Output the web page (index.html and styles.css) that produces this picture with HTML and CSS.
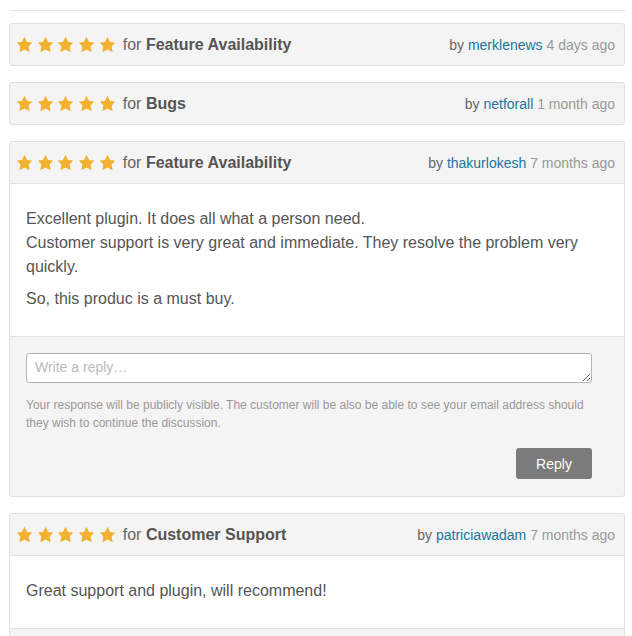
FILE: index.html
```html
<!DOCTYPE html>
<html>
<head>
<meta charset="utf-8">
<link rel="stylesheet" href="styles.css">
</head>
<body>
<div class="reviews">
  <div class="card">
    <div class="head">
      <div class="title">
        <span class="stars">
          <svg viewBox="0 0 20 20"><path d="M10 1l3 6 6 .75-4.12 4.62L16 19l-6-3-6 3 1.13-6.63L1 7.75 7 7z"/></svg>
          <svg viewBox="0 0 20 20"><path d="M10 1l3 6 6 .75-4.12 4.62L16 19l-6-3-6 3 1.13-6.63L1 7.75 7 7z"/></svg>
          <svg viewBox="0 0 20 20"><path d="M10 1l3 6 6 .75-4.12 4.62L16 19l-6-3-6 3 1.13-6.63L1 7.75 7 7z"/></svg>
          <svg viewBox="0 0 20 20"><path d="M10 1l3 6 6 .75-4.12 4.62L16 19l-6-3-6 3 1.13-6.63L1 7.75 7 7z"/></svg>
          <svg viewBox="0 0 20 20"><path d="M10 1l3 6 6 .75-4.12 4.62L16 19l-6-3-6 3 1.13-6.63L1 7.75 7 7z"/></svg>
        </span>
        <span class="for">for <strong>Feature Availability</strong></span>
      </div>
      <div class="meta">by <a href="#">merklenews</a> <span class="time">4 days ago</span></div>
    </div>
  </div>

  <div class="card">
    <div class="head">
      <div class="title">
        <span class="stars">
          <svg viewBox="0 0 20 20"><path d="M10 1l3 6 6 .75-4.12 4.62L16 19l-6-3-6 3 1.13-6.63L1 7.75 7 7z"/></svg>
          <svg viewBox="0 0 20 20"><path d="M10 1l3 6 6 .75-4.12 4.62L16 19l-6-3-6 3 1.13-6.63L1 7.75 7 7z"/></svg>
          <svg viewBox="0 0 20 20"><path d="M10 1l3 6 6 .75-4.12 4.62L16 19l-6-3-6 3 1.13-6.63L1 7.75 7 7z"/></svg>
          <svg viewBox="0 0 20 20"><path d="M10 1l3 6 6 .75-4.12 4.62L16 19l-6-3-6 3 1.13-6.63L1 7.75 7 7z"/></svg>
          <svg viewBox="0 0 20 20"><path d="M10 1l3 6 6 .75-4.12 4.62L16 19l-6-3-6 3 1.13-6.63L1 7.75 7 7z"/></svg>
        </span>
        <span class="for">for <strong>Bugs</strong></span>
      </div>
      <div class="meta">by <a href="#">netforall</a> <span class="time">1 month ago</span></div>
    </div>
  </div>

  <div class="card">
    <div class="head bordered">
      <div class="title">
        <span class="stars">
          <svg viewBox="0 0 20 20"><path d="M10 1l3 6 6 .75-4.12 4.62L16 19l-6-3-6 3 1.13-6.63L1 7.75 7 7z"/></svg>
          <svg viewBox="0 0 20 20"><path d="M10 1l3 6 6 .75-4.12 4.62L16 19l-6-3-6 3 1.13-6.63L1 7.75 7 7z"/></svg>
          <svg viewBox="0 0 20 20"><path d="M10 1l3 6 6 .75-4.12 4.62L16 19l-6-3-6 3 1.13-6.63L1 7.75 7 7z"/></svg>
          <svg viewBox="0 0 20 20"><path d="M10 1l3 6 6 .75-4.12 4.62L16 19l-6-3-6 3 1.13-6.63L1 7.75 7 7z"/></svg>
          <svg viewBox="0 0 20 20"><path d="M10 1l3 6 6 .75-4.12 4.62L16 19l-6-3-6 3 1.13-6.63L1 7.75 7 7z"/></svg>
        </span>
        <span class="for">for <strong>Feature Availability</strong></span>
      </div>
      <div class="meta">by <a href="#">thakurlokesh</a> <span class="time">7 months ago</span></div>
    </div>
    <div class="body">
      <p>Excellent plugin. It does all what a person need.<br>Customer support is very great and immediate. They resolve the problem very quickly.</p>
      <p>So, this produc is a must buy.</p>
    </div>
    <div class="foot">
      <textarea class="reply-box" placeholder="Write a reply…"></textarea>
      <p class="notice">Your response will be publicly visible. The customer will be also be able to see your email address should they wish to continue the discussion.</p>
      <div class="actions"><button class="reply-btn">Reply</button></div>
    </div>
  </div>

  <div class="card">
    <div class="head bordered">
      <div class="title">
        <span class="stars">
          <svg viewBox="0 0 20 20"><path d="M10 1l3 6 6 .75-4.12 4.62L16 19l-6-3-6 3 1.13-6.63L1 7.75 7 7z"/></svg>
          <svg viewBox="0 0 20 20"><path d="M10 1l3 6 6 .75-4.12 4.62L16 19l-6-3-6 3 1.13-6.63L1 7.75 7 7z"/></svg>
          <svg viewBox="0 0 20 20"><path d="M10 1l3 6 6 .75-4.12 4.62L16 19l-6-3-6 3 1.13-6.63L1 7.75 7 7z"/></svg>
          <svg viewBox="0 0 20 20"><path d="M10 1l3 6 6 .75-4.12 4.62L16 19l-6-3-6 3 1.13-6.63L1 7.75 7 7z"/></svg>
          <svg viewBox="0 0 20 20"><path d="M10 1l3 6 6 .75-4.12 4.62L16 19l-6-3-6 3 1.13-6.63L1 7.75 7 7z"/></svg>
        </span>
        <span class="for">for <strong>Customer Support</strong></span>
      </div>
      <div class="meta">by <a href="#">patriciawadam</a> <span class="time">7 months ago</span></div>
    </div>
    <div class="body">
      <p>Great support and plugin, will recommend!</p>
    </div>
    <div class="foot">
      <textarea class="reply-box" placeholder="Write a reply…"></textarea>
    </div>
  </div>
</div>
</body>
</html>
```

FILE: styles.css
```css
html, body {
  margin: 0;
  padding: 0;
  background: #fff;
}
body {
  font-family: "Liberation Sans", Arial, sans-serif;
  color: #555;
}
.reviews {
  margin: 10px 7px 0 9px;
  border-top: 1px solid #e6e6e6;
  padding-top: 12px;
  display: flex;
  flex-direction: column;
  gap: 16px;
}
.card {
  background: #f4f4f4;
  border: 1px solid #e0e0e0;
  border-radius: 3px;
  overflow: hidden;
}
.head {
  height: 41px;
  display: flex;
  align-items: center;
  justify-content: space-between;
  padding: 0 9px 0 6px;
}
.head.bordered {
  border-bottom: 1px solid #e2e2e2;
}
.title {
  display: flex;
  align-items: center;
}
.stars {
  display: flex;
  gap: 3.7px;
  margin-right: 7px;
}
.stars svg {
  width: 17px;
  height: 17px;
  fill: #f2b12f;
  display: block;
}
.for {
  font-size: 16px;
  color: #666;
}
.for strong {
  color: #555;
  font-weight: bold;
}
.meta {
  font-size: 14px;
  color: #666;
}
.meta a {
  color: #21759b;
  text-decoration: none;
}
.time {
  color: #999;
}
.body {
  background: #fff;
  padding: 15px 16px 17px;
}
.body p {
  margin: 8px 0;
  font-size: 16px;
  line-height: 24px;
  color: #555;
}
.foot {
  border-top: 1px solid #e2e2e2;
  padding: 16px 32px 17px 16px;
}
.reply-box {
  display: block;
  width: 100%;
  box-sizing: border-box;
  height: 30px;
  border: 1px solid #b4b4b4;
  border-radius: 3px;
  padding: 5px 8px;
  font-family: "Liberation Sans", Arial, sans-serif;
  font-size: 14px;
  color: #555;
  background: #fff;
  margin: 0;
}
.reply-box::placeholder {
  color: #bbb;
}
.notice {
  margin: 13px 0 0;
  font-size: 12px;
  line-height: 18px;
  color: #999;
}
.actions {
  display: flex;
  justify-content: flex-end;
  margin-top: 16px;
}
.reply-btn {
  width: 76px;
  height: 31px;
  border: none;
  border-radius: 3px;
  background: #7b7b7b;
  color: #fff;
  font-family: "Liberation Sans", Arial, sans-serif;
  font-size: 14px;
  padding: 0;
}
```
